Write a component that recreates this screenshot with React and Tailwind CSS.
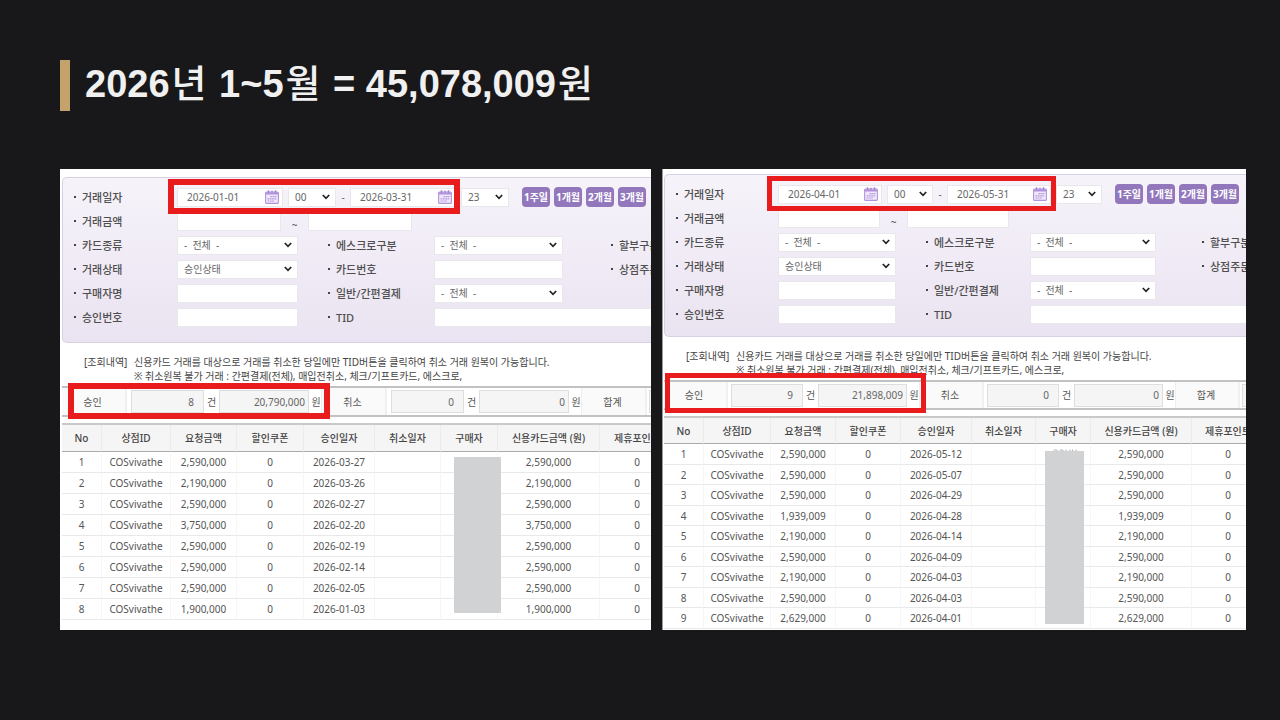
import { useId } from 'react';

const left = {
  name: '1분기',
  from: '2026-01-01',
  to: '2026-03-31',
  count: '8',
  amount: '20,790,000',
  rows: [
    ['2,590,000', '2026-03-27'],
    ['2,190,000', '2026-03-26'],
    ['2,590,000', '2026-02-27'],
    ['3,750,000', '2026-02-20'],
    ['2,590,000', '2026-02-19'],
    ['2,590,000', '2026-02-14'],
    ['2,590,000', '2026-02-05'],
    ['1,900,000', '2026-01-03'],
  ],
  cols: ['w-[40px]', 'w-[69px]', 'w-[66px]', 'w-[67px]', 'w-[71px]', 'w-[66px]', 'w-[57px]', 'w-[102px]', 'w-[75px]'],
  c: {
    panel: 'pt-2 pl-[2px] pb-[10px]',
    form: 'pb-[13px]',
    grid: 'grid-cols-[114px_121px_136px_129px_minmax(0,1fr)]',
    label3: 'pl-[48px]',
    date: 'w-[106px]',
    dateMark: '-left-[9px] -top-[8px] w-[292px] h-[35px] border-[6px]',
    hour: 'w-[48px]',
    amount: 'w-[104px]',
    buttons: 'ml-[13px]',
    sumRow: 'h-[31px]',
    sumLabel: 'w-[65px]',
    sumGroup: 'w-[195px] pl-[4px]',
    sumCount: 'w-[73px]',
    sumAmount: 'w-[90px]',
    sumMark: 'left-[6px] -top-[5px] w-[262px] h-[36px] border-[6px]',
    table: 'w-[613px]',
    head: 'h-[27px]',
    row: 'h-[21px]',
    mask: 'left-[392px] top-[32px] w-[47px] h-[156px]',
  },
};

const right = {
  name: '2분기',
  from: '2026-04-01',
  to: '2026-05-31',
  count: '9',
  amount: '21,898,009',
  peek: true,
  rows: [
    ['2,590,000', '2026-05-12'],
    ['2,590,000', '2026-05-07'],
    ['2,590,000', '2026-04-29'],
    ['1,939,009', '2026-04-28'],
    ['2,190,000', '2026-04-14'],
    ['2,590,000', '2026-04-09'],
    ['2,190,000', '2026-04-03'],
    ['2,590,000', '2026-04-03'],
    ['2,629,000', '2026-04-01'],
  ],
  cols: ['w-[40px]', 'w-[67px]', 'w-[65px]', 'w-[65px]', 'w-[71px]', 'w-[64px]', 'w-[55px]', 'w-[101px]', 'w-[73px]'],
  c: {
    panel: 'pt-[5px] pl-px pb-px border-l border-[#9a9a9a]',
    form: 'pb-[10px]',
    grid: 'grid-cols-[113px_118px_134px_126px_minmax(0,1fr)]',
    label3: 'pl-[46px]',
    date: 'w-[104px]',
    dateMark: '-left-[11px] -top-[8px] w-[289px] h-[35px] border-[5px]',
    hour: 'w-[46px]',
    amount: 'w-[102px]',
    buttons: 'ml-[13px]',
    sumRow: 'h-[30px]',
    sumLabel: 'w-[64px]',
    sumGroup: 'w-[192px] pl-[3px]',
    sumCount: 'w-[72px]',
    sumAmount: 'w-[89px]',
    sumMark: 'left-[1px] -top-[9px] w-[261px] h-[40px] border-[5px]',
    table: 'w-[601px]',
    head: 'h-[26px]',
    row: 'odd:h-[21px] even:h-[20px]',
    mask: 'left-[381px] top-[33px] w-[39px] h-[173px]',
  },
};

const headings = ['No', '상점ID', '요청금액', '할인쿠폰', '승인일자', '취소일자', '구매자', '신용카드금액 (원)', '제휴포인트'];
const box = 'h-[19px] border border-[#e9e6ec] bg-white text-[10px] leading-none text-[#666] outline-none';

function Label({ children, htmlFor, className = '' }) {
  return (
    <label htmlFor={htmlFor} className={`flex items-center gap-[6px] whitespace-nowrap text-[11px] leading-none font-medium text-[#4f4f4f] ${className}`}>
      <span className="size-[2px] shrink-0 bg-[#444]" />
      {children}
    </label>
  );
}

function Select({ options, className = '', ...rest }) {
  return (
    <span className={`relative block ${className}`}>
      <select className={`${box} block w-full appearance-none pl-[6px]`} {...rest}>
        {options.map((o) => (
          <option key={o}>{o}</option>
        ))}
      </select>
      <svg viewBox="0 0 8 6" className="pointer-events-none absolute top-[6px] right-[6px] h-[6px] w-[8px]" fill="none" stroke="#222" strokeWidth="1.7">
        <path d="M0.8 1 L4 4.3 L7.2 1" />
      </svg>
    </span>
  );
}

function CalendarIcon() {
  return (
    <svg viewBox="0 0 14 14" className="pointer-events-none absolute top-[2px] right-[4px] size-[14px]" fill="none">
      <rect x="0.6" y="2" width="12.8" height="11.4" rx="1" fill="#efe7fa" stroke="#b294dc" strokeWidth="1.1" />
      <path d="M0.6 2.4h12.8v2.2H0.6z" fill="#b294dc" />
      <path d="M3.5 0.3v3M7 0.8v2M10.5 0.3v3" stroke="#a583d4" strokeWidth="1.5" />
      <path d="M5.5 6.7h6M2.5 8.9h9M2.5 11h6.5" stroke="#b79be0" strokeWidth="1.2" strokeDasharray="1.8 0.5" />
    </svg>
  );
}

function DateInput({ className, ...rest }) {
  return (
    <span className={`relative block ${className}`}>
      <input type="text" className={`${box} block w-full pl-[9px]`} {...rest} />
      <CalendarIcon />
    </span>
  );
}

function SearchForm({ data }) {
  const id = useId();
  const { c } = data;
  const all = ['-\u00a0\u00a0전체\u00a0\u00a0-'];
  return (
    <form className={`overflow-hidden rounded-l-[5px] border border-r-0 border-[#d8d0e4] bg-linear-to-b from-[#f6f3fa] to-[#eae3f1] pt-[7px] ${c.form}`}>
      <div className={`grid auto-rows-[24px] items-center ${c.grid}`}>
        <Label htmlFor={`${id}-from`} className="pl-[11px]">거래일자</Label>
        <div className="relative col-span-4 flex items-center">
          <DateInput id={`${id}-from`} className={c.date} defaultValue={data.from} />
          <Select aria-label="시작 시각" className={`ml-[5px] ${c.hour}`} options={['00']} />
          <span className="w-[14px] text-center text-[10px] leading-none text-[#666]">-</span>
          <DateInput aria-label="종료일" className={c.date} defaultValue={data.to} />
          <Select aria-label="종료 시각" className={`ml-[5px] ${c.hour}`} options={['23']} />
          <div className={`flex gap-1 ${c.buttons}`}>
            {['1주일', '1개월', '2개월', '3개월'].map((t) => (
              <button key={t} type="button" className="h-[20px] w-[28px] rounded-[4px] bg-[#9377bc] text-[10px] leading-none font-bold whitespace-nowrap text-white">
                {t}
              </button>
            ))}
          </div>
          <div className={`pointer-events-none absolute z-10 border-[#e81c1c] ${c.dateMark}`} />
        </div>

        <Label htmlFor={`${id}-min`} className="pl-[11px]">거래금액</Label>
        <div className="col-span-4 flex items-center">
          <input id={`${id}-min`} type="text" className={`${box} ${c.amount}`} />
          <span className="w-[27px] pt-2 text-center text-[10px] leading-none text-[#555]">~</span>
          <input aria-label="최대 거래금액" type="text" className={`${box} ${c.amount}`} />
        </div>

        <Label htmlFor={`${id}-card`} className="pl-[11px]">카드종류</Label>
        <Select id={`${id}-card`} options={all} />
        <Label htmlFor={`${id}-escrow`} className="pl-[30px]">에스크로구분</Label>
        <Select id={`${id}-escrow`} options={all} />
        <Label className={c.label3}>할부구분</Label>

        <Label htmlFor={`${id}-state`} className="pl-[11px]">거래상태</Label>
        <Select id={`${id}-state`} options={['승인상태']} />
        <Label htmlFor={`${id}-number`} className="pl-[30px]">카드번호</Label>
        <input id={`${id}-number`} type="text" className={box} />
        <Label className={c.label3}>상점주문</Label>

        <Label htmlFor={`${id}-buyer`} className="pl-[11px]">구매자명</Label>
        <input id={`${id}-buyer`} type="text" className={box} />
        <Label htmlFor={`${id}-pay`} className="pl-[30px]">일반/간편결제</Label>
        <Select id={`${id}-pay`} options={all} />
        <span />

        <Label htmlFor={`${id}-approval`} className="pl-[11px]">승인번호</Label>
        <input id={`${id}-approval`} type="text" className={box} />
        <Label htmlFor={`${id}-tid`} className="pl-[30px]">TID</Label>
        <input id={`${id}-tid`} type="text" className={`${box} col-span-2 border-r-0`} />
      </div>
    </form>
  );
}

const sumField = 'h-[23px] border border-[#dedede] bg-[#f5f5f5] text-right text-[10px] leading-none text-[#666] outline-none';

function SummaryLabel({ children, c }) {
  return (
    <div className={`flex shrink-0 items-center justify-center self-stretch border-r-2 border-[#f0f0f0] bg-[#fafafa] pr-[2px] ${c.sumLabel}`}>{children}</div>
  );
}

function SummaryGroup({ label, count, amount, c }) {
  return (
    <>
      <SummaryLabel c={c}>{label}</SummaryLabel>
      <div className={`flex shrink-0 items-center self-stretch border-r border-[#eee] ${c.sumGroup}`}>
        <input readOnly aria-label={`${label} 건수`} value={count} className={`${sumField} shrink-0 pr-[9px] ${c.sumCount}`} />
        <span className="w-[15px] shrink-0 text-center">건</span>
        <input readOnly aria-label={`${label} 금액`} value={amount} className={`${sumField} shrink-0 pr-[3px] ${c.sumAmount}`} />
        <span className="flex-1 pl-[2px] text-center whitespace-nowrap">원</span>
      </div>
    </>
  );
}

function Panel({ data }) {
  const { c } = data;
  return (
    <section aria-label={data.name} className={`min-w-0 overflow-hidden bg-white ${c.panel}`}>
      <SearchForm data={data} />

      <div className="mt-3 flex pl-[22px] text-[10px] leading-[14px] whitespace-nowrap text-[#444]">
        <span className="w-[50px] shrink-0">[조회내역]</span>
        <p>
          신용카드 거래를 대상으로 거래를 취소한 당일에만 TID버튼을 클릭하여 취소 거래 원복이 가능합니다.
          <br />※ 취소원복 불가 거래 : 간편결제(전체), 매입전취소, 체크/기프트카드, 에스크로,
        </p>
      </div>

      <div className={`relative mt-[3px] flex items-center border-y-2 border-[#c2c2c2] text-[10px] leading-none text-[#555] ${c.sumRow}`}>
        <SummaryGroup label="승인" count={data.count} amount={data.amount} c={c} />
        <SummaryGroup label="취소" count="0" amount="0" c={c} />
        <SummaryLabel c={c}>합계</SummaryLabel>
        <div className="min-w-0 flex-1 pl-[2px]">
          <input readOnly aria-label="합계 건수" className={`${sumField} block w-full border-r-0`} />
        </div>
        <div className={`pointer-events-none absolute z-10 border-[#e81c1c] ${c.sumMark}`} />
      </div>

      <div className="relative mt-[6px] border-t-2 border-[#c9c9c9]">
        <table className={`table-fixed border-separate border-spacing-0 text-center text-[10px] leading-none whitespace-nowrap text-[#555] ${c.table}`}>
          <colgroup>
            {data.cols.map((w, i) => (
              <col key={i} className={w} />
            ))}
          </colgroup>
          <thead>
            <tr className={c.head}>
              {headings.map((h) => (
                <th key={h} className="border-r border-b border-r-[#ebebeb] border-b-[#ababab] bg-[#f5f5f5] p-0 font-medium text-[#444]">{h}</th>
              ))}
            </tr>
          </thead>
          <tbody>
            {data.rows.map(([amount, date], i) => (
              <tr key={i} className={c.row}>
                {[i + 1, 'COSvivathe', amount, '0', date, '', '', amount, '0'].map((v, j) => (
                  <td key={j} className="border-r border-b border-r-[#f6f6f6] border-b-[#e9e9e9] p-0">{v}</td>
                ))}
              </tr>
            ))}
          </tbody>
        </table>
        <div className={`absolute bg-[#d1d2d4] ${c.mask}`}>
          {data.peek && (
            <svg viewBox="0 0 24 2" className="absolute -top-[2px] left-[8px] h-[2px] w-[24px]" fill="none" stroke="#999" strokeWidth="0.8">
              <path d="M0.5 1.6Q2.5 0 4.5 1.6M6.5 1.6Q8.5 0 10.5 1.6M13 0.5v1.5M17 0.5v1.5M19.5 0.5v1.5M23 0.5v1.5" />
            </svg>
          )}
        </div>
      </div>
    </section>
  );
}

function Hangul({ children }) {
  return <span className="px-[2px] leading-none font-medium">{children}</span>;
}

export default function App() {
  return (
    <main className="min-h-screen bg-[#18181a] pt-[60px] pr-[34px] pb-[60px] pl-[60px] font-['Noto_Sans','Noto_Sans_CJK_KR',sans-serif]">
      <h1 className="h-[51px] border-l-[10px] border-[#c3a26c] pl-[15px] font-['Liberation_Sans','Noto_Sans_CJK_KR',sans-serif] text-[38px] leading-[48px] font-bold whitespace-nowrap text-[#f0f0f0]">
        2026<Hangul>년</Hangul> 1~5<Hangul>월</Hangul> = 45,078,009<Hangul>원</Hangul>
      </h1>
      <div className="mt-[58px] grid grid-cols-[minmax(0,591fr)_minmax(0,584fr)] gap-[11px]">
        <Panel data={left} />
        <Panel data={right} />
      </div>
    </main>
  );
}
